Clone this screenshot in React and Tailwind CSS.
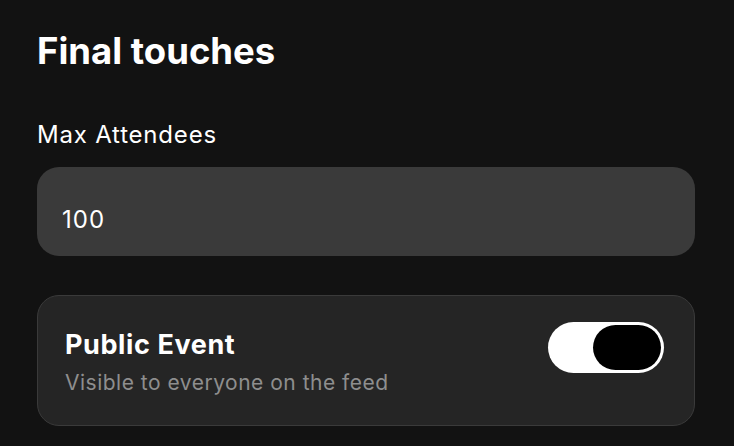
import React, {useState} from "react";

function App() {
  const [maxAttendees, setMaxAttendees] = useState("100");
  const [isPublic, setIsPublic] = useState(true);

  return (
    <section className="min-h-screen w-full bg-[#121212] font-['Inter','Noto_Sans',sans-serif] text-white overflow-hidden">
      <div className="flex flex-col pl-[37px] pr-[39px] pt-[29px]">
        <h1 className="text-[36.5px] leading-[44px] font-bold">
          Final touches
        </h1>

        <label className="mt-[47px] text-[24px] leading-[30px] font-normal tracking-[0.8px]">
          Max Attendees
        </label>
        <input
          type="text"
          value={maxAttendees}
          onChange={(e) => setMaxAttendees(e.target.value)}
          className="mt-[17px] h-[89px] w-full rounded-[22px] bg-[#3a3a3a] px-[25px] pt-[16px] text-[24px] tracking-[1px] text-white outline-none"
        />

        <div className="mt-[39px] h-[131px] flex items-start justify-between rounded-[22px] border border-[#3a3a3a] bg-[#252525] pl-[27px] pr-[30px]">
          <div className="flex flex-col pt-[33px]">
            <span className="text-[27px] leading-[32px] font-bold tracking-[0.6px]">
              Public Event
            </span>
            <span className="mt-[9px] text-[21px] leading-[26px] tracking-[0.5px] text-[#8e8e8e]">
              Visible to everyone on the feed
            </span>
          </div>
          <button
            type="button"
            onClick={() => setIsPublic(!isPublic)}
            className={`mt-[26px] flex h-[51px] w-[116px] items-center rounded-full p-[3px] ${
              isPublic ? "bg-white justify-end" : "bg-[#3a3a3a] justify-start"
            }`}
          >
            <span className="block h-[45px] w-[68px] rounded-full bg-black" />
          </button>
        </div>
      </div>
    </section>
  );
}

export default App;
